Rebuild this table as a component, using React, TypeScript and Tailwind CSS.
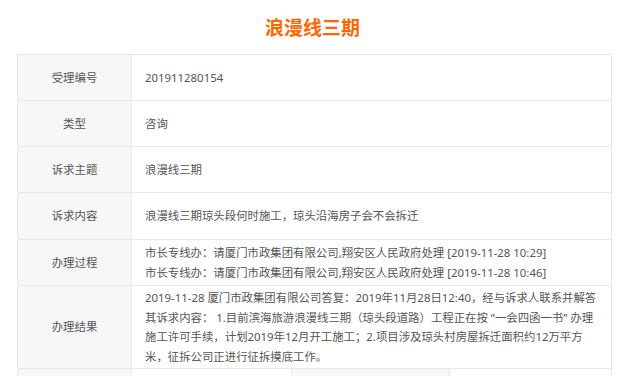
const ROWS: { label: string; lines: string[]; h: string }[] = [
  { label: '受理编号', lines: ['201911280154'], h: 'h-[46px]' },
  { label: '类型', lines: ['咨询'], h: 'h-[46px]' },
  { label: '诉求主题', lines: ['浪漫线三期'], h: 'h-[46px]' },
  { label: '诉求内容', lines: ['浪漫线三期琼头段何时施工，琼头沿海房子会不会拆迁'], h: 'h-[47px]' },
  {
    label: '办理过程',
    lines: [
      '市长专线办：请厦门市政集团有限公司,翔安区人民政府处理 [2019-11-28 10:29]',
      '市长专线办：请厦门市政集团有限公司,翔安区人民政府处理 [2019-11-28 10:46]',
    ],
    h: 'h-[46px]',
  },
  {
    label: '办理结果',
    lines: [
      '2019-11-28 厦门市政集团有限公司答复：2019年11月28日12:40，经与诉求人联系并解答',
      '其诉求内容： 1.目前滨海旅游浪漫线三期（琼头段道路）工程正在按 “一会四函一书” 办理',
      '施工许可手续，计划2019年12月开工施工；2.项目涉及琼头村房屋拆迁面积约12万平方',
      '米，征拆公司正进行征拆摸底工作。',
    ],
    h: 'h-[83px]',
  },
]

export default function App() {
  return (
    <div
      className="bg-white w-[625px] h-[376px] overflow-hidden text-[#555]"
      style={{ fontFamily: '"Noto Sans", "Noto Sans CJK SC", sans-serif' }}
    >
      <h1
        className="h-[54px] flex items-center justify-center pb-[1px] text-[19px] font-bold text-[#ff6600] leading-none"
        style={{ fontFamily: '"Noto Sans CJK SC", sans-serif' }}
      >
        浪漫线三期
      </h1>
      <div className="ml-[17px] w-[595px] border-t border-l border-[#e8e8e8] text-[11.4px]">
        {ROWS.map((r) => (
          <div key={r.label} className={`flex ${r.h}`}>
            <div className="w-[114px] shrink-0 bg-[#f7f7f7] border-r border-b border-[#e8e8e8] flex items-center justify-center">
              {r.label}
            </div>
            <div className="flex-1 border-r border-b border-[#e8e8e8] flex flex-col justify-center pl-[13px] leading-[19.5px]">
              {r.lines.map((l, i) => (
                <div key={i} className="whitespace-nowrap">
                  {l}
                </div>
              ))}
            </div>
          </div>
        ))}
        <div className="flex h-[46px]">
          <div className="w-[114px] shrink-0 bg-[#f7f7f7] border-r border-b border-[#e8e8e8]" />
          <div className="w-[160px] shrink-0 border-r border-b border-[#e8e8e8]" />
          <div className="w-[158px] shrink-0 bg-[#f7f7f7] border-r border-b border-[#e8e8e8]" />
          <div className="flex-1 border-r border-b border-[#e8e8e8]" />
        </div>
      </div>
    </div>
  )
}
